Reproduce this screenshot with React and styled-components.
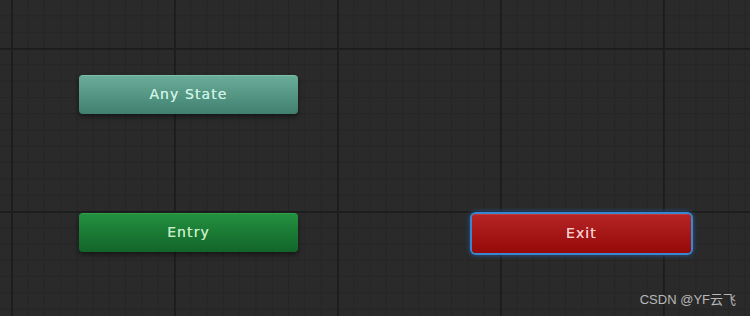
import React from "react"
import styled, { createGlobalStyle } from "styled-components"

const GlobalStyle = createGlobalStyle`
  html, body {
    margin: 0;
    padding: 0;
    background: #292929;
  }
`

const nodes = [
  { id: "any", label: "Any State", kind: "any", x: 79, y: 75 },
  { id: "entry", label: "Entry", kind: "entry", x: 79, y: 213 },
  { id: "exit", label: "Exit", kind: "exit", x: 472, y: 214 },
]

const palette = {
  any: {
    top: "#69ad99",
    bottom: "#417f6e",
    edge: "#7cc0ab",
    text: "#cdf2e4",
  },
  entry: {
    top: "#23903f",
    bottom: "#12652a",
    edge: "#2fa04c",
    text: "#c4ecc6",
  },
  exit: {
    top: "#b42424",
    bottom: "#960909",
    edge: "#c23a3a",
    text: "#f6cccc",
  },
}

const App = () => (
  <>
    <GlobalStyle />
    <Canvas>
      {nodes.map(node => (
        <Node
          key={node.id}
          $kind={node.kind}
          $selected={node.kind === "exit"}
          style={{ left: node.x, top: node.y }}
        >
          {node.label}
        </Node>
      ))}
      <Watermark>CSDN @YF云飞</Watermark>
    </Canvas>
  </>
)

export default App

const Canvas = styled.div`
  position: relative;
  width: 750px;
  height: 316px;
  overflow: hidden;
  background-color: #2a2a2a;
  background-image:
    linear-gradient(to right, #1c1c1c 0 1px, #1f1f1f 1px 2px, transparent 2px),
    linear-gradient(to bottom, #1c1c1c 0 1px, #1f1f1f 1px 2px, transparent 2px),
    linear-gradient(to right, #252525 0 1px, transparent 1px),
    linear-gradient(to bottom, #252525 0 1px, transparent 1px);
  background-size: 163px 163px, 163px 163px, 16.3px 16.3px, 16.3px 16.3px;
  background-position: 11px 48px, 11px 48px, 11px 48px, 11px 48px;
`

const Node = styled.div`
  position: absolute;
  box-sizing: border-box;
  width: 219px;
  height: 39px;
  padding-bottom: 2px;
  display: flex;
  align-items: center;
  justify-content: center;
  border-radius: 4px;
  font-family: "DejaVu Sans", sans-serif;
  font-size: 14px;
  letter-spacing: 1.1px;
  color: ${p => palette[p.$kind].text};
  text-shadow: 0 0 0.4px ${p => palette[p.$kind].text};
  background: linear-gradient(
    to bottom,
    ${p => palette[p.$kind].top},
    ${p => palette[p.$kind].bottom}
  );
  border-top: 1px solid ${p => palette[p.$kind].edge};
  box-shadow: ${p =>
    p.$selected
      ? "0 0 0 2px #3a86d0, 0 0 4px 3px rgba(40, 110, 190, 0.5)"
      : "0 3px 5px rgba(0, 0, 0, 0.45)"};
`

const Watermark = styled.div`
  position: absolute;
  right: 14px;
  bottom: 8px;
  font-family: "Liberation Sans", "Noto Sans CJK SC", sans-serif;
  font-size: 13px;
  color: #b8b8b8;
`
